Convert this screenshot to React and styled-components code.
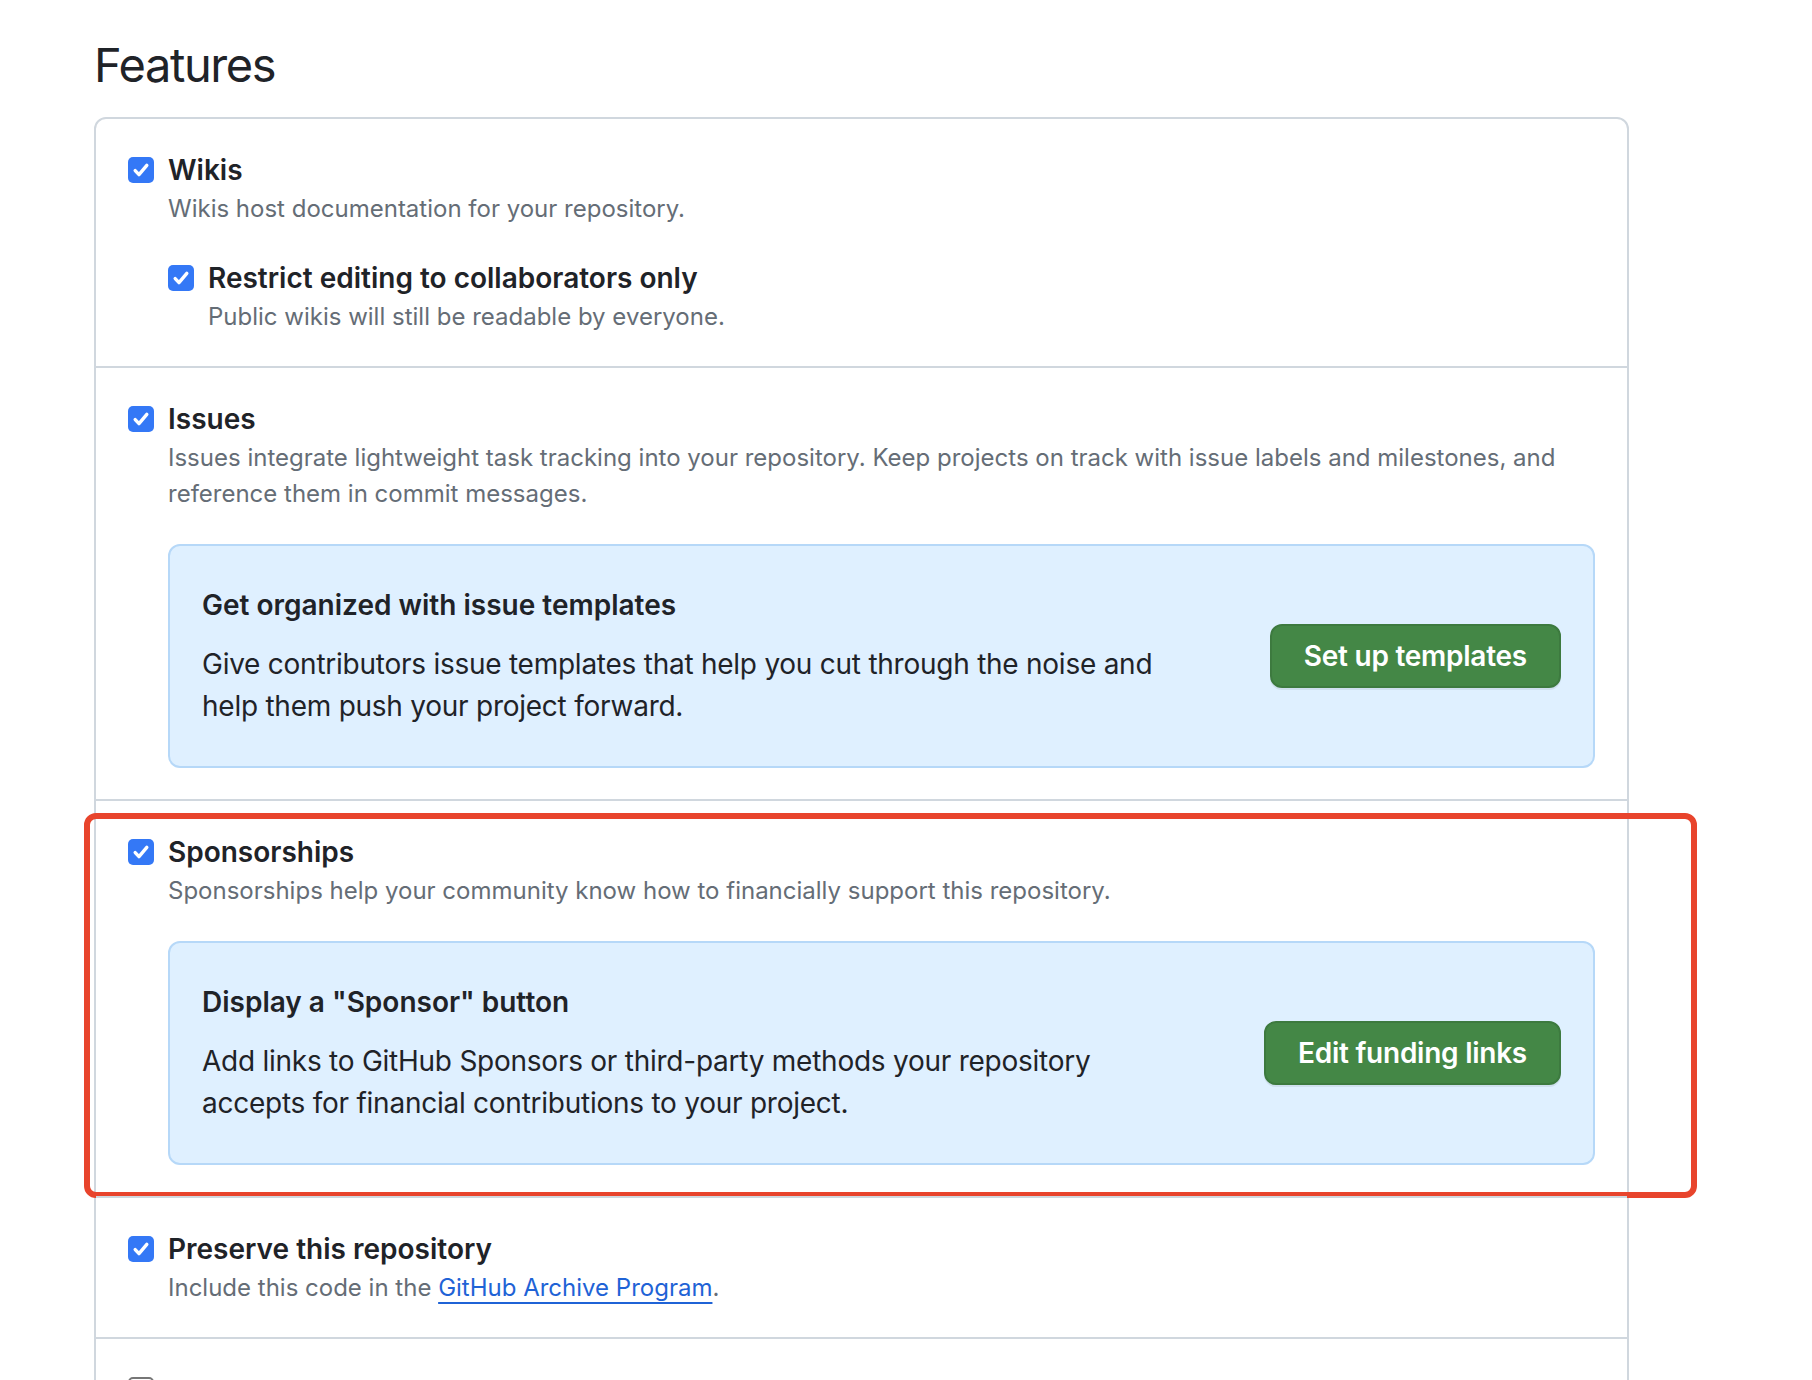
import React from 'react';
import styled, { createGlobalStyle } from 'styled-components';

const GlobalStyle = createGlobalStyle`
  html, body {
    margin: 0;
    padding: 0;
    background: #ffffff;
  }
  body {
    font-family: Inter, "Noto Sans", "Liberation Sans", sans-serif;
    color: #1f2328;
    -webkit-font-smoothing: antialiased;
  }
`;

const Page = styled.div`
  padding: 0 183px 0 94px;
  height: 1380px;
  overflow: hidden;
`;

const Heading = styled.h2`
  margin: 35px 0 22px;
  font-size: 47px;
  line-height: 60px;
  font-weight: 400;
  letter-spacing: -1.4px;
  color: #1f2328;
`;

const Box = styled.div`
  border: 2px solid #d0d7de;
  border-radius: 12px;
`;

const Row = styled.div`
  position: relative;
  padding: 30px 32px 31px;
  & + & {
    border-top: 2px solid #d0d7de;
  }
`;

const Item = styled.div`
  display: grid;
  grid-template-columns: 26px 1fr;
  column-gap: 14px;
  margin-top: ${p => (p.nested ? '30px' : '0')};
`;

const Box26 = styled.span`
  width: 26px;
  height: 26px;
  margin-top: 8px;
  border-radius: 5px;
  box-sizing: border-box;
  display: flex;
  align-items: center;
  justify-content: center;
  background: ${p => (p.checked ? '#3478f6' : '#ffffff')};
  border: ${p => (p.checked ? 'none' : '2px solid #767676')};
`;

const Content = styled.div`
  min-width: 0;
  min-height: 42px;
`;

const Title = styled.div`
  font-size: 28px;
  line-height: 42px;
  font-weight: 600;
  color: #1f2328;
`;

const Note = styled.div`
  font-size: 24px;
  line-height: 36px;
  color: #656d76;
`;

const Link = styled.a`
  color: #1f63d6;
  text-decoration: underline;
  text-decoration-thickness: 2px;
  text-underline-offset: 6px;
`;

const Callout = styled.div`
  margin-top: 32px;
  display: flex;
  align-items: center;
  justify-content: space-between;
  padding: 38px 32px 39px;
  background: #dff0ff;
  border: 2px solid #b6d8f8;
  border-radius: 12px;
`;

const CalloutText = styled.div`
  width: 970px;
`;

const CalloutTitle = styled.div`
  font-size: 28px;
  line-height: 42px;
  font-weight: 600;
  color: #1f2328;
  margin-bottom: 17px;
`;

const CalloutBody = styled.div`
  font-size: 28px;
  line-height: 42px;
  letter-spacing: -0.25px;
  color: #1f2328;
`;

const GreenButton = styled.button`
  flex: none;
  height: 64px;
  padding: 0 32px;
  border: 2px solid #3d7a3f;
  border-radius: 12px;
  background: #448746;
  color: #ffffff;
  font-family: inherit;
  font-size: 28px;
  font-weight: 600;
  letter-spacing: -0.25px;
  box-shadow: 0 2px 0 rgba(31, 35, 40, 0.08);
`;

const Highlight = styled.div`
  position: absolute;
  top: 12px;
  left: -12px;
  right: -70px;
  bottom: -2px;
  border: 6px solid #e8442c;
  border-radius: 12px;
  pointer-events: none;
`;

function Checkbox({ checked = true }) {
  return (
    <Box26 checked={checked}>
      {checked && (
        <svg width="26" height="26" viewBox="0 0 26 26">
          <path
            d="M7.2 13.6 L11 17.6 L18.8 8.4"
            fill="none"
            stroke="#ffffff"
            strokeWidth="3.4"
            strokeLinecap="round"
            strokeLinejoin="round"
          />
        </svg>
      )}
    </Box26>
  );
}

function CheckItem({ title, note, nested, checked, children }) {
  return (
    <Item nested={nested}>
      <Checkbox checked={checked} />
      <Content>
        {title && <Title>{title}</Title>}
        {note && <Note>{note}</Note>}
        {children}
      </Content>
    </Item>
  );
}

function Promo({ title, body, action }) {
  return (
    <Callout>
      <CalloutText>
        <CalloutTitle>{title}</CalloutTitle>
        <CalloutBody>{body}</CalloutBody>
      </CalloutText>
      <GreenButton>{action}</GreenButton>
    </Callout>
  );
}

export default function App() {
  return (
    <>
      <GlobalStyle />
      <Page>
        <Heading>Features</Heading>
        <Box>
          <Row>
            <CheckItem title="Wikis" note="Wikis host documentation for your repository.">
              <CheckItem
                nested
                title="Restrict editing to collaborators only"
                note="Public wikis will still be readable by everyone."
              />
            </CheckItem>
          </Row>
          <Row>
            <CheckItem
              title="Issues"
              note="Issues integrate lightweight task tracking into your repository. Keep projects on track with issue labels and milestones, and reference them in commit messages."
            >
              <Promo
                title="Get organized with issue templates"
                body="Give contributors issue templates that help you cut through the noise and help them push your project forward."
                action="Set up templates"
              />
            </CheckItem>
          </Row>
          <Row>
            <CheckItem
              title="Sponsorships"
              note="Sponsorships help your community know how to financially support this repository."
            >
              <Promo
                title={'Display a "Sponsor" button'}
                body="Add links to GitHub Sponsors or third-party methods your repository accepts for financial contributions to your project."
                action="Edit funding links"
              />
            </CheckItem>
            <Highlight />
          </Row>
          <Row>
            <CheckItem
              title="Preserve this repository"
              note={
                <>
                  Include this code in the <Link href="#">GitHub Archive Program</Link>.
                </>
              }
            />
          </Row>
          <Row>
            <CheckItem checked={false} />
          </Row>
        </Box>
      </Page>
    </>
  );
}
